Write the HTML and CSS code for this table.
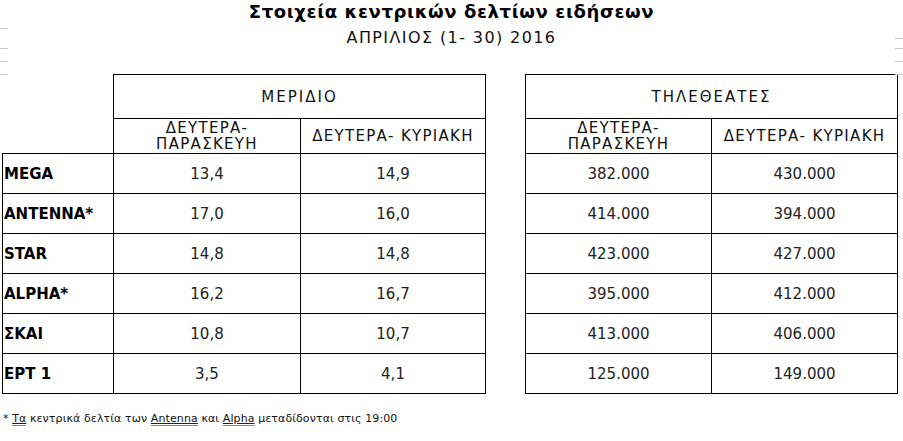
FILE: index.html
```html
<!DOCTYPE html>
<html lang="el">
<head>
<meta charset="utf-8">
<title>Στοιχεία κεντρικών δελτίων ειδήσεων</title>
<link rel="stylesheet" href="styles.css">
</head>
<body>
<div class="page">
  <h1 class="title">Στοιχεία κεντρικών δελτίων ειδήσεων</h1>
  <h2 class="subtitle">ΑΠΡΙΛΙΟΣ (1- 30) 2016</h2>

  <div class="tables">
    <table class="grid share">
      <colgroup><col class="c-label"><col class="c-a"><col class="c-b"></colgroup>
      <tr class="h1">
        <td class="blank"></td>
        <td class="head" colspan="2">ΜΕΡΙΔΙΟ</td>
      </tr>
      <tr class="h2">
        <td class="blank"></td>
        <td class="sub">ΔΕΥΤΕΡΑ-<br>ΠΑΡΑΣΚΕΥΗ</td>
        <td class="sub">ΔΕΥΤΕΡΑ- ΚΥΡΙΑΚΗ</td>
      </tr>
      <tr><td class="label">MEGA</td><td class="num">13,4</td><td class="num">14,9</td></tr>
      <tr><td class="label">ANTENNA*</td><td class="num">17,0</td><td class="num">16,0</td></tr>
      <tr><td class="label">STAR</td><td class="num">14,8</td><td class="num">14,8</td></tr>
      <tr><td class="label">ALPHA*</td><td class="num">16,2</td><td class="num">16,7</td></tr>
      <tr><td class="label">ΣΚΑΙ</td><td class="num">10,8</td><td class="num">10,7</td></tr>
      <tr><td class="label">ΕΡΤ 1</td><td class="num">3,5</td><td class="num">4,1</td></tr>
    </table>

    <table class="grid viewers">
      <colgroup><col class="c-v"><col class="c-v"></colgroup>
      <tr class="h1">
        <td class="head" colspan="2">ΤΗΛΕΘΕΑΤΕΣ</td>
      </tr>
      <tr class="h2">
        <td class="sub">ΔΕΥΤΕΡΑ-<br>ΠΑΡΑΣΚΕΥΗ</td>
        <td class="sub">ΔΕΥΤΕΡΑ- ΚΥΡΙΑΚΗ</td>
      </tr>
      <tr><td class="num">382.000</td><td class="num">430.000</td></tr>
      <tr><td class="num">414.000</td><td class="num">394.000</td></tr>
      <tr><td class="num">423.000</td><td class="num">427.000</td></tr>
      <tr><td class="num">395.000</td><td class="num">412.000</td></tr>
      <tr><td class="num">413.000</td><td class="num">406.000</td></tr>
      <tr><td class="num">125.000</td><td class="num">149.000</td></tr>
    </table>
  </div>

  <p class="note">* <span class="sp">Τα</span> κεντρικά δελτία των <span class="sp">Antenna</span> και <span class="sp">Alpha</span> μεταδίδονται στις 19:00</p>

  <div class="ticks left" aria-hidden="true">
    <span class="t t1"></span><span class="t t2"></span><span class="t t3"></span><span class="t t4"></span>
  </div>
  <div class="ticks right" aria-hidden="true">
    <span class="t t0"></span><span class="t t2"></span><span class="t t3"></span><span class="t t4"></span>
  </div>
</div>
</body>
</html>
```

FILE: styles.css
```css
html, body {
  margin: 0;
  padding: 0;
  background: #fff;
}

.page {
  position: relative;
  width: 903px;
  height: 441px;
  overflow: hidden;
  font-family: "DejaVu Sans", "Liberation Sans", sans-serif;
  color: #111;
}

.title {
  margin: 0;
  padding-top: 1px;
  font-size: 18px;
  line-height: 22px;
  font-weight: bold;
  text-align: center;
  letter-spacing: 0.6px;
  color: #000;
}

.subtitle {
  margin: 5px 0 0;
  font-size: 16px;
  line-height: 20px;
  font-weight: normal;
  text-align: center;
  letter-spacing: 1.4px;
  color: #111;
}

.tables {
  display: flex;
  align-items: flex-start;
  gap: 39px;
  margin-top: 26px;
  padding-left: 2px;
}

.grid {
  border-collapse: collapse;
  table-layout: fixed;
  font-size: 15px;
}

.share { width: 484px; }
.viewers { width: 373px; }

.c-label { width: 111px; }
.c-a { width: 187px; }
.c-b { width: 185px; }
.c-v { width: 186px; }

.grid td {
  border: 1px solid #000;
  padding: 0;
  text-align: center;
  vertical-align: middle;
  height: 39px;
  line-height: 16px;
}

.grid td.blank {
  border: none;
}

.grid .h1 td { height: 43px; }
.grid .h2 td { height: 34px; }

.head {
  letter-spacing: 2px;
  color: #111;
}

.sub {
  letter-spacing: 1.3px;
  color: #111;
}

.label {
  text-align: left !important;
  padding-left: 1px !important;
  font-weight: bold;
  color: #000;
}

.num {
  color: #222;
}

.note {
  margin: 18px 0 0 3px;
  font-size: 11px;
  line-height: 14px;
  letter-spacing: 0.1px;
  color: #111;
}

.sp {
  text-decoration: underline;
  text-decoration-color: #222;
  text-underline-offset: 1px;
  border-bottom: 1px solid #e06060;
}

.ticks {
  position: absolute;
  top: 0;
  width: 8px;
  height: 80px;
}
.ticks.left { left: 0; }
.ticks.right { right: 0; }

.t {
  position: absolute;
  left: 0;
  width: 8px;
  height: 1px;
  background: #c8c8c8;
}
.t0 { top: 38px; }
.t1 { top: 28px; }
.t2 { top: 48px; }
.t3 { top: 61px; }
.t4 { top: 74px; }
```
